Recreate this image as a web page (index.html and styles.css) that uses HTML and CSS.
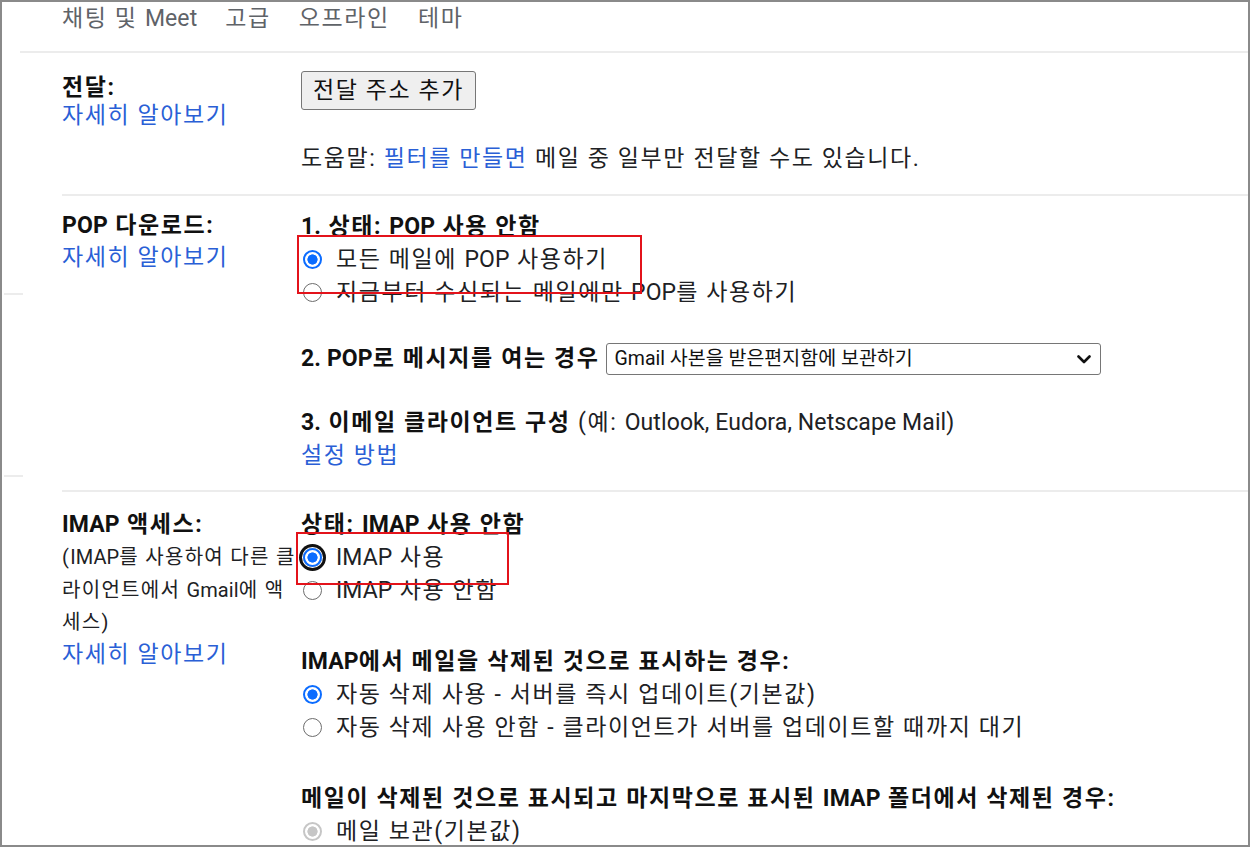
FILE: index.html
```html
<!DOCTYPE html>
<html lang="ko">
<head>
<meta charset="utf-8">
<title>설정 - 전달 및 POP/IMAP</title>
<link rel="stylesheet" href="styles.css">
</head>
<body>
<div class="frame">
  <nav class="tabs">
    <span class="tab">채팅 및 <span class="en">Meet</span></span>
    <span class="tab">고급</span>
    <span class="tab">오프라인</span>
    <span class="tab">테마</span>
  </nav>
  <div class="rule rule-full"></div>

  <section class="row row-fwd">
    <div class="label label-fwd">
      <div class="label-title">전달:</div>
      <a class="link">자세히 알아보기</a>
    </div>
    <div class="content">
      <button class="btn">전달 주소 추가</button>
      <p class="help">도움말: <a class="link">필터를 만들면</a> 메일 중 일부만 전달할 수도 있습니다.</p>
    </div>
  </section>
  <div class="rule"></div>

  <section class="row row-pop">
    <div class="label">
      <div class="label-title"><span class="en">POP</span> 다운로드:</div>
      <a class="link">자세히 알아보기</a>
    </div>
    <div class="content">
      <div class="line bold"><span class="en">1.</span> 상태: <span class="en">POP</span> 사용 안함</div>
      <label class="line opt"><input type="radio" name="pop" checked><span>모든 메일에 <span class="en">POP</span> 사용하기</span></label>
      <label class="line opt"><input type="radio" name="pop"><span>지금부터 수신되는 메일에만 <span class="en">POP</span>를 사용하기</span></label>
      <div class="line group sel-line">
        <span class="bold"><span class="en">2. POP</span>로 메시지를 여는 경우</span>
        <span class="select-wrap">
          <select class="select">
            <option>Gmail 사본을 받은편지함에 보관하기</option>
          </select>
          <svg class="chev" width="14" height="9" viewBox="0 0 14 9" aria-hidden="true"><path d="M1.5 1.5 L7 7 L12.5 1.5" fill="none" stroke="#111" stroke-width="2.6" stroke-linecap="round" stroke-linejoin="round"/></svg>
        </span>
      </div>
      <div class="line group"><span class="bold"><span class="en">3.</span> 이메일 클라이언트 구성</span> (예: <span class="en">Outlook, Eudora, Netscape Mail)</span></div>
      <a class="line link block">설정 방법</a>
    </div>
    <div class="mark mark-pop"></div>
  </section>
  <div class="rule"></div>

  <section class="row row-imap">
    <div class="label label-imap">
      <div class="label-title"><span class="en">IMAP</span> 액세스:</div>
      <div class="label-note">(<span class="en">IMAP</span>를 사용하여 다른 클<br>라이언트에서 <span class="en">Gmail</span>에 액<br>세스)</div>
      <a class="link">자세히 알아보기</a>
    </div>
    <div class="content">
      <div class="line bold">상태: <span class="en">IMAP</span> 사용 안함</div>
      <label class="line opt"><input type="radio" name="imap" class="focused" checked><span><span class="en">IMAP</span> 사용</span></label>
      <label class="line opt"><input type="radio" name="imap"><span><span class="en">IMAP</span> 사용 안함</span></label>
      <div class="line bold group2"><span class="en">IMAP</span>에서 메일을 삭제된 것으로 표시하는 경우:</div>
      <label class="line opt"><input type="radio" name="exp" checked><span>자동 삭제 사용 - 서버를 즉시 업데이트(기본값)</span></label>
      <label class="line opt"><input type="radio" name="exp"><span>자동 삭제 사용 안함 - 클라이언트가 서버를 업데이트할 때까지 대기</span></label>
      <div class="line bold group2">메일이 삭제된 것으로 표시되고 마지막으로 표시된 <span class="en">IMAP</span> 폴더에서 삭제된 경우:</div>
      <label class="line opt"><input type="radio" name="del" checked disabled><span>메일 보관(기본값)</span></label>
    </div>
    <div class="mark mark-imap"></div>
  </section>
</div>
</body>
</html>
```

FILE: styles.css
```css
* { box-sizing: border-box; }

html, body {
  margin: 0;
  padding: 0;
  background: #fff;
}

body {
  font-family: Roboto, "Noto Sans CJK KR", sans-serif;
  font-size: 23px;
  letter-spacing: 1.6px;
  color: #202124;
}

.en {
  letter-spacing: 0.1px;
}

.frame {
  position: relative;
  width: 1250px;
  height: 847px;
  border: 2px solid #8a8a8a;
  overflow: hidden;
  background: #fff;
}

.tabs {
  display: flex;
  gap: 28px;
  padding-left: 60px;
  height: 36px;
  line-height: 34px;
  color: #5f6368;
  margin-bottom: 13px;
}

.rule {
  height: 2px;
  background: #ececec;
  margin-left: 60px;
}

.rule-full {
  margin-left: 18px;
}

.row {
  position: relative;
  display: flex;
}

.label {
  width: 239px;
  padding-left: 60px;
  flex: none;
  box-sizing: content-box;
  line-height: 32px;
}

.label-title {
  font-weight: 700;
  color: #111;
}

.label-note {
  font-size: 20px;
  letter-spacing: 1.3px;
  white-space: nowrap;
  line-height: 32.5px;
}

.content {
  flex: 1;
  line-height: 33px;
}

.link {
  color: #2a5fd6;
  text-decoration: none;
  cursor: pointer;
}

.block { display: block; }

.bold {
  font-weight: 700;
  color: #111;
}

.line {
  display: block;
  white-space: nowrap;
}

/* forwarding row */
.row-fwd {
  padding-top: 18px;
  padding-bottom: 19px;
}

.label-fwd {
  padding-top: 3px;
  line-height: 28px;
}

.btn {
  display: block;
  width: 175px;
  height: 39px;
  padding: 0;
  font: inherit;
  letter-spacing: 1.6px;
  color: #111;
  background: #efefef;
  border: 1.5px solid #767676;
  border-radius: 3px;
}

.help {
  margin: 32px 0 0;
  line-height: 33px;
}

/* POP row */
.row-pop {
  padding-top: 14px;
  padding-bottom: 18px;
}

/* faint cut-off rule stubs at the left edge of the capture */
.row-pop::before,
.row-pop::after {
  content: "";
  position: absolute;
  left: 2px;
  width: 19px;
  height: 2px;
  background: #ececec;
}

.row-pop::before { top: 97px; }
.row-pop::after { top: 279px; }

.group {
  margin-top: 33px;
}

.sel-line {
  display: flex;
  align-items: center;
  gap: 6px;
  height: 33px;
}

.sel-line + .group {
  margin-top: 31px;
}

.select-wrap {
  position: relative;
  display: block;
  width: 495px;
  height: 32px;
}

.select {
  display: block;
  width: 100%;
  height: 100%;
  font-family: Roboto, "Noto Sans CJK KR", sans-serif;
  font-size: 19.5px;
  letter-spacing: 0;
  color: #111;
  padding: 0 8px;
  border: 1.5px solid #767676;
  border-radius: 3px;
  background: #fff;
  appearance: none;
  -webkit-appearance: none;
}

.chev {
  position: absolute;
  right: 10px;
  top: 12px;
  pointer-events: none;
}

/* IMAP row */
.row-imap {
  padding-top: 16px;
}

.label-imap .label-title {
  line-height: 33px;
}

.group2 {
  margin-top: 38px;
}

/* radios */
.opt {
  display: flex;
  align-items: center;
  height: 33px;
}

.opt input {
  appearance: none;
  -webkit-appearance: none;
  flex: none;
  width: 19px;
  height: 19px;
  margin: 0 14px 0 2px;
  border: 1.5px solid #6d6d6d;
  border-radius: 50%;
  background: #fff;
}

.opt input:checked {
  border: 2px solid #0b6cff;
  background: radial-gradient(circle, #0b6cff 0 4.8px, #fff 5.4px);
}

.opt input:disabled {
  border-color: #c6c6c6;
  background: radial-gradient(circle, #c6c6c6 0 4.8px, #fff 5.4px);
}

.opt input.focused {
  box-shadow: 0 0 0 1px #fff, 0 0 0 4px #111;
}

/* red annotation boxes */
.mark {
  position: absolute;
  border: 2px solid #e3131b;
  pointer-events: none;
}

.mark-pop {
  left: 295px;
  top: 39px;
  width: 345px;
  height: 59px;
}

.mark-imap {
  left: 294px;
  top: 40px;
  width: 213px;
  height: 53px;
}
```
